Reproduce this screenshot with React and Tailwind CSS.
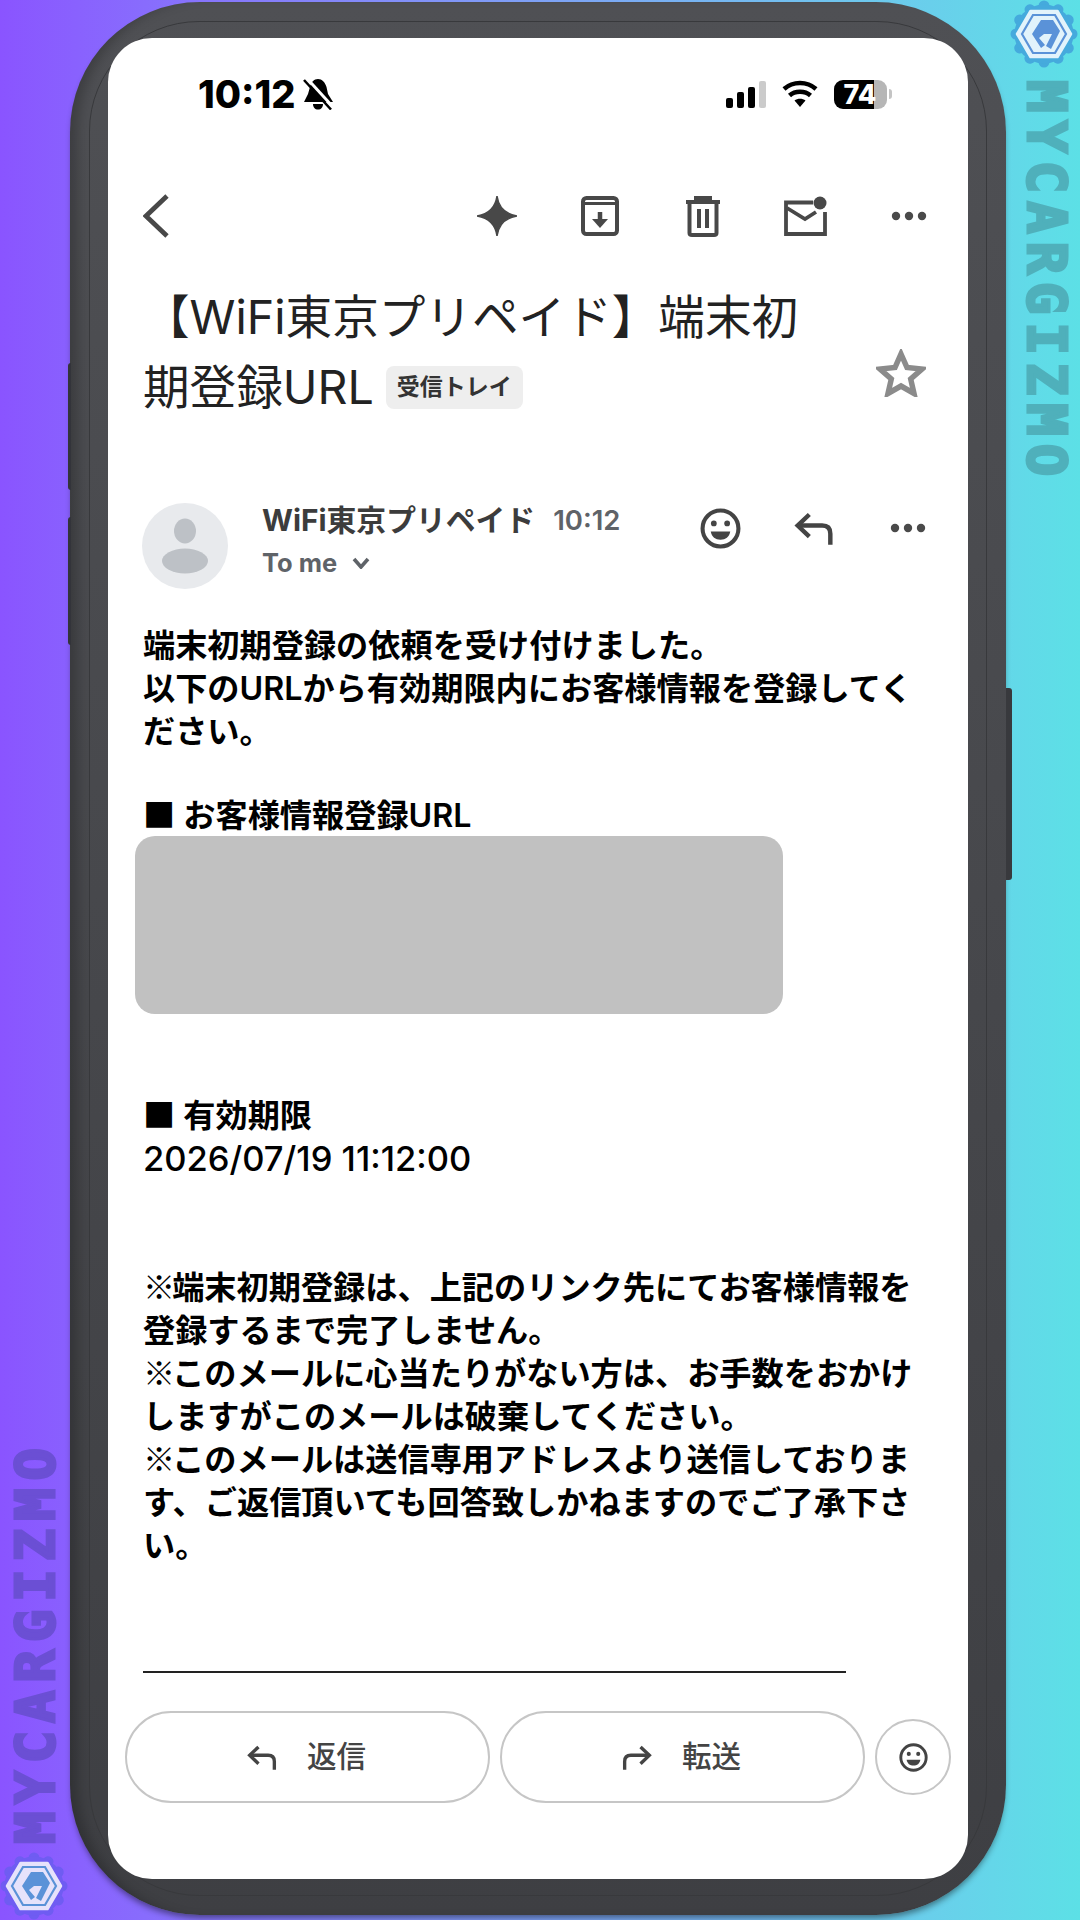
const gearTeeth = [0, 30, 60, 90, 120, 150, 180, 210, 240, 270, 300, 330];

function Badge({ gear, light, className }) {
  return (
    <svg viewBox="0 0 68 68" className={className}>
      {gearTeeth.map((deg) => (
        <circle key={deg} cx="34" cy="6" r="5.500" fill={gear} transform={`rotate(${deg} 34 34)`} />
      ))}
      <circle cx="34" cy="34" r="29.500" fill={gear} />
      <path d="M20.500 11H47.500L61 34L47.500 57H20.500L7 34Z" fill={light} stroke={light} strokeWidth="2.500" strokeLinejoin="round" />
      <path d="M23 15H45L56 34L45 53H23L12 34Z" fill="none" stroke="#5a92d8" strokeWidth="2.200" />
      <path d="M22 34L31 20H43L50 31L41 49L36 46L42 34H34L29 38L35 45L31 48Z" fill="#5a92d8" />
    </svg>
  );
}

function Dots({ size = 'w-[36px]' }) {
  return (
    <svg viewBox="0 0 36 10" className={size}>
      <circle cx="5" cy="5" r="4.200" fill="#4a4a4a" />
      <circle cx="18" cy="5" r="4.200" fill="#4a4a4a" />
      <circle cx="31" cy="5" r="4.200" fill="#4a4a4a" />
    </svg>
  );
}

function Smiley({ className }) {
  return (
    <svg viewBox="0 0 40 40" className={className}>
      <circle cx="20" cy="20" r="17.500" fill="none" stroke="#444" strokeWidth="4" />
      <circle cx="13.500" cy="15" r="2.800" fill="#444" />
      <circle cx="26.500" cy="15" r="2.800" fill="#444" />
      <path d="M10.500 23H29.500C28.500 28.500 25 31 20 31C15 31 11.500 28.500 10.500 23Z" fill="#444" />
    </svg>
  );
}

function ReplyArrow({ className }) {
  return (
    <svg viewBox="0 0 34 30" className={className} fill="none" stroke="#444" strokeWidth="3.800">
      <path d="M13 3L3 12.500L13 22" />
      <path d="M3 12.500H24C28.500 12.500 31 15 31 19.500V29" />
    </svg>
  );
}

function ToolbarIcons() {
  return (
    <div className="flex items-center pr-[8px]">
      <div className="w-[103px] flex justify-center">
        <svg viewBox="0 0 40 40" className="w-[40px] h-[40px]">
          <path d="M20 0C21.500 11 28 18 40 20C28 22 21.500 29 20 40C18.500 29 12 22 0 20C12 18 18.500 11 20 0Z" fill="#484848" stroke="#484848" strokeWidth="1.500" />
        </svg>
      </div>
      <div className="w-[103px] flex justify-center">
        <svg viewBox="0 0 38 40" className="w-[38px] h-[40px]" fill="none" stroke="#484848" strokeWidth="4">
          <rect x="2" y="2" width="34" height="36" rx="3.500" />
          <path d="M2 7.500H36" strokeWidth="3" />
          <path d="M19 16V28" strokeWidth="4.500" />
          <path d="M11 23H27L19 32Z" fill="#484848" stroke="none" />
        </svg>
      </div>
      <div className="w-[103px] flex justify-center">
        <svg viewBox="0 0 34 41" className="w-[34px] h-[41px]" fill="none" stroke="#484848" strokeWidth="4">
          <path d="M0 6H34" />
          <path d="M10 5V2H24V5" />
          <path d="M3.500 7V37C3.500 38.500 4.500 39 6 39H28C29.500 39 30.500 38.500 30.500 37V7" />
          <path d="M13 13V32M21 13V32" />
        </svg>
      </div>
      <div className="w-[103px] flex justify-center">
        <svg viewBox="0 0 43 41" className="w-[43px] h-[41px]" fill="none" stroke="#484848" strokeWidth="3.800">
          <path d="M29 6.500H2V38H41V16" />
          <path d="M3 12L21 23L32 16" />
          <circle cx="36" cy="7" r="6.500" fill="#484848" stroke="none" />
        </svg>
      </div>
      <div className="w-[103px] flex justify-center">
        <Dots />
      </div>
    </div>
  );
}

function StatusBar() {
  return (
    <div className="h-[112px] flex items-center justify-between pl-[90px] pr-[76px] text-black">
      <div className="flex items-center gap-[8px]">
        <span className="text-[38px] leading-none font-extrabold">10:12</span>
        <svg viewBox="0 0 30 32" className="w-[30px] h-[32px]">
          <path d="M15 1C19 1 22 4 23.500 9L25 16L30 24H1L5 16L7 9C8 4 11 1 15 1Z" fill="#000" />
          <path d="M10 26H20C20 29.500 18 31.500 15 31.500C12 31.500 10 29.500 10 26Z" fill="#000" />
          <path d="M4.500 1L31 30" stroke="#fff" strokeWidth="3" />
          <path d="M1 2L28 31.500" stroke="#000" strokeWidth="2.500" />
        </svg>
      </div>
      <div className="flex items-center gap-[16px]">
        <div className="flex items-end gap-[4px] h-[27px]">
          <div className="w-[7px] h-[10px] rounded-[2px] bg-black" />
          <div className="w-[7px] h-[16px] rounded-[2px] bg-black" />
          <div className="w-[7px] h-[21px] rounded-[2px] bg-black" />
          <div className="w-[7px] h-[27px] rounded-[2px] bg-[#cbcbcb]" />
        </div>
        <svg viewBox="0 0 36 28" className="w-[36px] h-[28px]">
          <path d="M18 27L12.500 20.500C15.500 18 20.500 18 23.500 20.500Z" fill="#000" />
          <path d="M7.500 15.500C13 10.500 23 10.500 28.500 15.500" fill="none" stroke="#000" strokeWidth="4.500" />
          <path d="M2 9C11 1 25 1 34 9" fill="none" stroke="#000" strokeWidth="4.500" />
        </svg>
        <div className="flex items-center gap-[2px]">
          <div className="w-[53px] h-[29px] rounded-[9px] bg-[linear-gradient(90deg,#000_75%,#b6b6b6_75%)] flex items-center justify-center pr-[1px]">
            <span className="text-[27px] leading-none font-extrabold text-white">74</span>
          </div>
          <div className="w-[3px] h-[10px] rounded-r-full bg-[#c4c4c4]" />
        </div>
      </div>
    </div>
  );
}

function Mark({ children, className }) {
  return <span className={`leading-none font-['Noto_Sans_CJK_JP',sans-serif] ${className || ''}`}>{children}</span>;
}

function Note({ children }) {
  return <Mark className="tracking-[-3px]">{children}</Mark>;
}

function App() {
  return (
    <div className="relative w-[1080px] h-[1920px] overflow-hidden pl-[70px] pt-[2px] bg-gradient-to-r from-[#8a54ff] to-[#5ce0e6] font-['Inter','Noto_Sans_CJK_JP',sans-serif]">
      {/* watermarks */}
      <Badge gear="#45aadd" light="#e2f3fb" className="absolute right-[2px] top-0 w-[68px] h-[68px]" />
      <div className="absolute left-[1016px] top-[80px] [writing-mode:vertical-rl] text-[54px] leading-[60px] font-bold tracking-[7.900px] text-[#4fb0bb] [-webkit-text-stroke:3px_#4fb0bb] font-['DejaVu_Sans_Mono',monospace]">
        MYCARGIZMO
      </div>
      <Badge gear="#6f5cf2" light="#e6e2fb" className="absolute left-0 bottom-0 w-[68px] h-[68px]" />
      <div className="absolute left-[6px] top-[1440px] rotate-180 [writing-mode:vertical-rl] text-[54px] leading-[60px] font-bold tracking-[7.900px] text-[#6b4fd4] [-webkit-text-stroke:3px_#6b4fd4] font-['DejaVu_Sans_Mono',monospace]">
        MYCARGIZMO
      </div>

      {/* phone */}
      <div className="relative w-[936px] h-[1913px] rounded-[130px] bg-gradient-to-b from-[#4f5054] to-[#3e3f43] pl-[38px] pt-[36px] shadow-[inset_14px_0_12px_-6px_rgba(0,0,0,0.22),0_5px_6px_-2px_rgba(0,0,0,0.45)]">
        <div className="absolute left-[-2px] top-[361px] w-[3px] h-[127px] rounded-l-[3px] bg-[#33343a]" />
        <div className="absolute left-[-2px] top-[515px] w-[3px] h-[128px] rounded-l-[3px] bg-[#33343a]" />
        <div className="absolute right-[-6px] top-[686px] w-[6px] h-[192px] rounded-r-[3px] bg-[#38393d]" />
        <div className="absolute inset-[19px] rounded-[110px] border border-[#38393c]" />

        <div className="relative w-[860px] h-[1841px] rounded-[44px] overflow-hidden bg-white">
          <StatusBar />

          <div className="mt-[22px] h-[88px] flex items-center justify-between pl-[35px]">
            <svg viewBox="0 0 26 44" className="w-[26px] h-[44px]" fill="none" stroke="#484848" strokeWidth="4.800">
              <path d="M24 2L3 22L24 42" />
            </svg>
            <ToolbarIcons />
          </div>

          <div className="mt-[22px] pl-[35px] pr-[42px] text-[46.600px] leading-[70px] text-[#222]">
            <div className="whitespace-nowrap">【WiFi東京プリペイド】端末初</div>
            <div className="flex items-center justify-between">
              <div className="flex items-center">
                <span className="whitespace-nowrap">期登録URL</span>
                <span className="ml-[12px] w-[137px] h-[43px] rounded-[8px] bg-[#eeeeee] flex items-center justify-center text-[23px] leading-none font-bold text-[#333]">
                  受信トレイ
                </span>
              </div>
              <svg viewBox="0 0 50 48" className="-mt-[28px] w-[50px] h-[48px]">
                <path d="M25 5L31 18.500L46 20L34.700 30L38 44.500L25 37L12 44.500L15.300 30L4 20L19 18.500Z" fill="none" stroke="#8b8b8b" strokeWidth="5.500" />
              </svg>
            </div>
          </div>

          <div className="mt-[81px] pl-[34px] flex items-start">
            <div className="w-[86px] h-[86px] rounded-full bg-[#e8eaed] flex items-center justify-center">
              <svg viewBox="0 0 46 56" className="w-[46px] h-[56px]">
                <ellipse cx="23" cy="13" rx="11" ry="12.500" fill="#bdc1c6" />
                <ellipse cx="23" cy="43" rx="23" ry="12.500" fill="#bdc1c6" />
              </svg>
            </div>
            <div className="ml-[34px] pt-[2px]">
              <div className="h-[32px] flex items-center whitespace-nowrap">
                <span className="text-[29.800px] leading-none font-bold text-[#3c3c3c]">WiFi東京プリペイド</span>
                <span className="ml-[18px] text-[27.500px] leading-none font-semibold text-[#5f6368]">10:12</span>
              </div>
              <div className="mt-[11px] h-[30px] flex items-center">
                <span className="text-[25.500px] leading-none font-bold text-[#5f6368]">To me</span>
                <svg viewBox="0 0 18 12" className="ml-[15px] w-[18px] h-[12px]" fill="none" stroke="#5f6368" strokeWidth="3.600">
                  <path d="M2 2L9 10L16 2" />
                </svg>
              </div>
            </div>
            <div className="ml-auto pr-[13px] flex items-center h-[50px]">
              <div className="w-[94px] flex justify-center"><Smiley className="w-[41px] h-[41px]" /></div>
              <div className="w-[94px] flex justify-center"><ReplyArrow className="w-[40px] h-[35px]" /></div>
              <div className="w-[94px] flex justify-center"><Dots /></div>
            </div>
          </div>

          <div className="mt-[35px] pl-[35px] text-[32.200px] leading-[43px] font-semibold text-black whitespace-nowrap">
            <div>端末初期登録の依頼を受け付けました。</div>
            <div>以下のURLから有効期限内にお客様情報を登録してく</div>
            <div>ださい。</div>
            <div className="mt-[41px]"><Mark>■</Mark> お客様情報登録URL</div>
            <div className="-mt-[1px] -ml-[8px] w-[648px] h-[178px] rounded-[20px] bg-[#c1c1c1]" />
            <div className="mt-[80px]"><Mark>■</Mark> 有効期限</div>
            <div className="text-[34.500px] font-medium">2026/07/19 11:12:00</div>
            <div className="mt-[86px]"><Note>※</Note>端末初期登録は、上記のリンク先にてお客様情報を</div>
            <div>登録するまで完了しません。</div>
            <div><Note>※</Note>このメールに心当たりがない方は、お手数をおかけ</div>
            <div>しますがこのメールは破棄してください。</div>
            <div><Note>※</Note>このメールは送信専用アドレスより送信しておりま</div>
            <div>す、ご返信頂いても回答致しかねますのでご了承下さ</div>
            <div>い。</div>
          </div>

          <div className="mt-[104px] ml-[35px] w-[703px] h-[2px] bg-[#222]" />

          <div className="mt-[38px] pl-[17px] flex items-center">
            <button className="w-[365px] h-[92px] rounded-full border-2 border-[#c6c6c6] flex items-center justify-center gap-[30px] pr-[2px]">
              <ReplyArrow className="w-[30px] h-[27px]" />
              <span className="text-[29.500px] leading-none font-medium text-[#444]">返信</span>
            </button>
            <button className="ml-[10px] w-[365px] h-[92px] rounded-full border-2 border-[#c6c6c6] flex items-center justify-center gap-[30px] pr-[2px]">
              <ReplyArrow className="w-[30px] h-[27px] -scale-x-100" />
              <span className="text-[29.500px] leading-none font-medium text-[#444]">転送</span>
            </button>
            <button className="ml-[10px] w-[76px] h-[76px] rounded-full border-2 border-[#c6c6c6] flex items-center justify-center">
              <Smiley className="w-[29px] h-[29px]" />
            </button>
          </div>
        </div>
      </div>
    </div>
  );
}

export default App;
